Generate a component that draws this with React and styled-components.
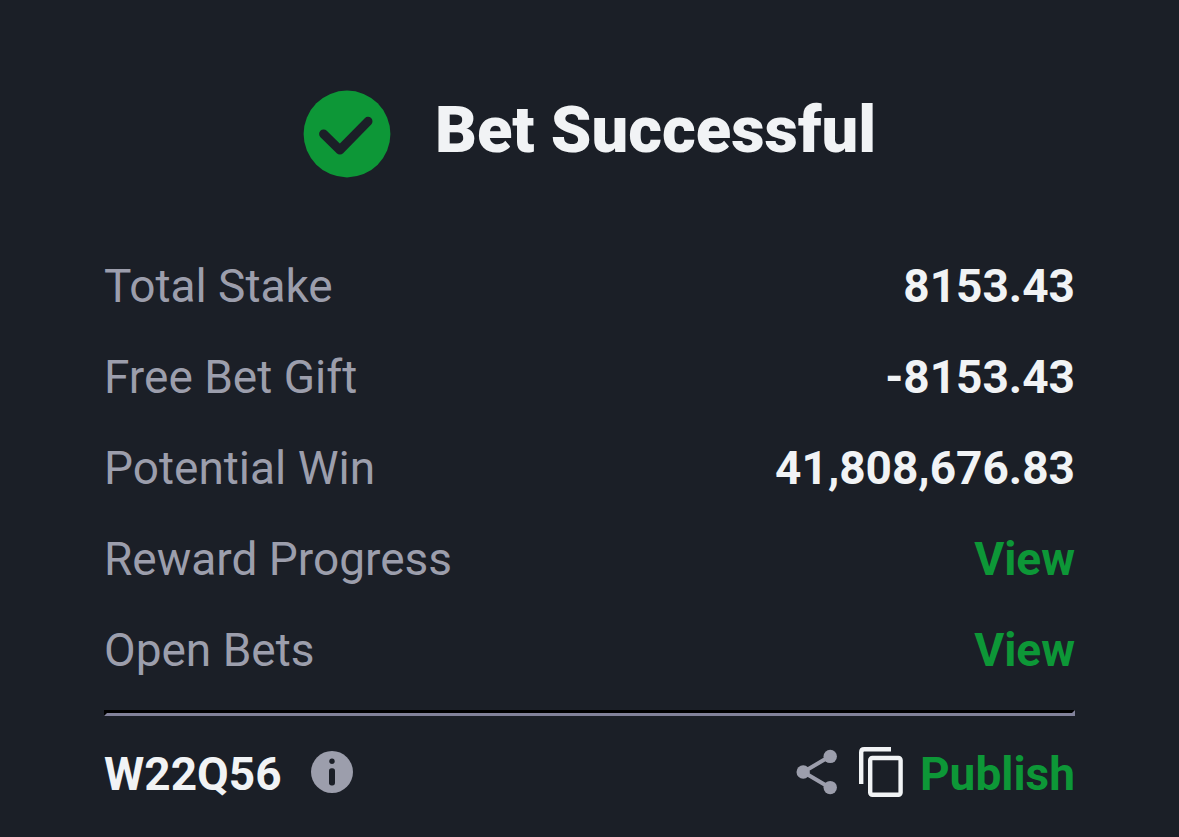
import React from 'react';
import styled, { createGlobalStyle } from 'styled-components';

const colors = {
  background: '#1b1f27',
  text: '#f1f3f5',
  muted: '#9c9eac',
  green: '#0d9737',
};

const summary = [
  { label: 'Total Stake', value: '8153.43' },
  { label: 'Free Bet Gift', value: '-8153.43' },
  { label: 'Potential Win', value: '41,808,676.83' },
  { label: 'Reward Progress', link: '#reward-progress' },
  { label: 'Open Bets', link: '#open-bets' },
];

const SuccessIcon = () => (
  <svg width="88" height="88" viewBox="0 0 88 88" aria-hidden="true">
    <circle cx="44" cy="44" r="43.4" fill={colors.green} />
    <path
      d="M20.6 44L36.9 60L65 31.3"
      fill="none"
      stroke={colors.background}
      strokeWidth="9"
      strokeLinecap="round"
      strokeLinejoin="round"
    />
  </svg>
);

const InfoIcon = () => (
  <svg width="42" height="42" viewBox="0 0 42 42" aria-hidden="true">
    <circle cx="21" cy="21" r="21" fill={colors.muted} />
    <circle cx="21" cy="10.3" r="2.7" fill={colors.background} />
    <rect x="18" y="17.2" width="6" height="17.2" rx="2.6" fill={colors.background} />
  </svg>
);

const ShareIcon = () => (
  <svg width="42" height="46" viewBox="0 0 42 46" aria-hidden="true">
    <path
      d="M34 7.3L7.3 23L34 38.7"
      fill="none"
      stroke={colors.muted}
      strokeWidth="4"
    />
    <circle cx="34.2" cy="7.4" r="6.7" fill={colors.muted} />
    <circle cx="7.2" cy="23" r="6.7" fill={colors.muted} />
    <circle cx="34.2" cy="38.6" r="6.7" fill={colors.muted} />
  </svg>
);

const CopyIcon = () => (
  <svg width="44" height="50" viewBox="0 0 44 50" aria-hidden="true">
    <g fill="none" stroke={colors.text} strokeWidth="4.4">
      <path d="M2.2 37V5.2Q2.2 2.2 5.2 2.2H32" />
      <rect x="11.2" y="11" width="30.4" height="36.8" rx="2.2" />
    </g>
  </svg>
);

const App = () => {
  return (
    <>
      <GlobalStyle />
      <StyledReceipt>
        <Header>
          <SuccessIcon />
          <Title>Bet Successful</Title>
        </Header>
        <Summary>
          {summary.map((item) => (
            <Row key={item.label}>
              <Label>{item.label}</Label>
              <Value>
                {item.link ? (
                  <ViewLink href={item.link}>View</ViewLink>
                ) : (
                  item.value
                )}
              </Value>
            </Row>
          ))}
        </Summary>
        <Divider />
        <Footer>
          <Code>W22Q56</Code>
          <IconButton type="button" aria-label="Booking code info">
            <InfoIcon />
          </IconButton>
          <Actions>
            <IconButton type="button" aria-label="Share">
              <ShareIcon />
            </IconButton>
            <IconButton type="button" aria-label="Copy">
              <CopyIcon />
            </IconButton>
          </Actions>
          <PublishButton type="button">Publish</PublishButton>
        </Footer>
      </StyledReceipt>
    </>
  );
};

export default App;

// STYLING
const GlobalStyle = createGlobalStyle`
  * {
    box-sizing: border-box;
  }
  body {
    margin: 0;
    background: ${colors.background};
    color: ${colors.text};
    font-family: Roboto, sans-serif;
    font-size: 46px;
    line-height: 54px;
  }
`;

const StyledReceipt = styled.main`
  padding: 90px 104px 32px;
`;

const Header = styled.header`
  display: flex;
  justify-content: center;
  gap: 44px;
`;

const Title = styled.h1`
  margin: 0;
  font-size: 65px;
  line-height: 80px;
  font-weight: 900;
`;

const Summary = styled.dl`
  margin: 81px 0 33px;
  display: flex;
  flex-direction: column;
  gap: 37px;
`;

const Row = styled.div`
  display: flex;
  justify-content: space-between;
`;

const Label = styled.dt`
  color: ${colors.muted};
`;

const Value = styled.dd`
  margin: 0;
  font-weight: 700;
`;

const ViewLink = styled.a`
  color: ${colors.green};
  text-decoration: none;
`;

const Divider = styled.hr`
  margin: 0;
  border: 3px solid;
  border-color: #000 #82829a #82829a #000;
`;

const Footer = styled.footer`
  margin-top: 27px;
  display: flex;
  align-items: center;
`;

const Code = styled.span`
  margin-right: 29px;
  padding-top: 4px;
  font-weight: 700;
`;

const IconButton = styled.button`
  display: flex;
  padding: 0;
  border: 0;
  background: none;
  cursor: pointer;
`;

const Actions = styled.div`
  margin: 0 17px 0 auto;
  display: flex;
  align-items: center;
  gap: 21px;
`;

const PublishButton = styled.button`
  padding: 4px 0 0;
  border: 0;
  background: none;
  color: ${colors.green};
  font: inherit;
  font-weight: 700;
  cursor: pointer;
`;
